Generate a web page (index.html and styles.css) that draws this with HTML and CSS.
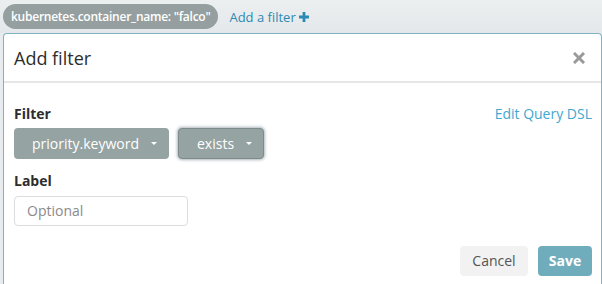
FILE: index.html
```html
<!DOCTYPE html>
<html>
<head>
<meta charset="utf-8">
<link rel="stylesheet" href="styles.css">
</head>
<body>
<div class="topbar">
  <span class="pill">kubernetes.container_name: "falco"</span>
  <span class="add-filter">Add a filter <svg class="plus" width="10" height="10" viewBox="0 0 10 10"><path d="M3.6 0h2.8v3.6H10v2.8H6.4V10H3.6V6.4H0V3.6h3.6z" fill="#2b8ab3"/></svg></span>
</div>
<div class="modal">
  <div class="modal-header">
    <span class="title">Add filter</span>
    <svg class="close" width="12" height="12" viewBox="0 0 12 12"><path d="M2 2L10 10M10 2L2 10" stroke="#9a9a9a" stroke-width="3" stroke-linecap="square"/></svg>
  </div>
  <div class="modal-body">
    <div class="row-head">
      <span class="label">Filter</span>
      <span class="link">Edit Query DSL</span>
    </div>
    <div class="selects">
      <span class="select wide">priority.keyword <span class="caret"></span></span>
      <span class="select focused">exists <span class="caret"></span></span>
    </div>
    <div class="label label2">Label</div>
    <div class="input">Optional</div>
    <div class="footer">
      <span class="btn cancel">Cancel</span>
      <span class="btn save">Save</span>
    </div>
  </div>
</div>
</body>
</html>
```

FILE: styles.css
```css
html, body {
  margin: 0;
  padding: 0;
}
body {
  background: #e9ecee;
  font-family: "Open Sans", "Noto Sans", sans-serif;
  font-size: 14px;
  color: #2d2d2d;
  height: 284px;
  overflow: hidden;
}
.topbar {
  height: 33px;
  display: flex;
  align-items: center;
  padding-left: 3px;
  background: linear-gradient(#eceff0, #e5e8ea);
}
.pill {
  height: 25px;
  line-height: 25px;
  padding: 0 8px;
  border-radius: 13px;
  background: #959f9f;
  color: #fff;
  font-size: 12px;
  font-weight: 600;
  letter-spacing: -0.25px;
}
.add-filter {
  margin-left: 11px;
  color: #2b8ab3;
  font-size: 13px;
  display: flex;
  align-items: center;
  gap: 3px;
}
.modal {
  margin-left: 3px;
  background: #fff;
  border: 1px solid #7fb3c1;
  border-bottom: none;
  border-radius: 4px 4px 0 0;
  height: 251px;
  box-sizing: border-box;
}
.modal-header {
  height: 47px;
  display: flex;
  align-items: center;
  justify-content: space-between;
  padding: 0 16px 0 10px;
  border-bottom: 2px solid #e6e6e6;
}
.title {
  font-size: 18px;
  color: #2d2d2d;
  margin-top: 1px;
}
.modal-body {
  padding: 20px 9px 0 10px;
}
.row-head {
  display: flex;
  justify-content: space-between;
  align-items: center;
  height: 20px;
}
.label {
  font-weight: 700;
  color: #2d2d2d;
}
.link {
  color: #3ea8cf;
}
.selects {
  display: flex;
  gap: 9px;
  margin-top: 5px;
}
.select {
  height: 31px;
  display: flex;
  align-items: center;
  padding: 0 12px 0 18px;
  background: #95a3a2;
  color: #fff;
  border-radius: 4px;
  box-sizing: border-box;
}
.select.wide {
  width: 155px;
}
.select.focused {
  width: 86px;
  border: 1px solid #7d8b8a;
  box-shadow: 0 0 3px 1px rgba(90, 110, 120, 0.5);
}
.caret {
  display: inline-block;
  width: 0;
  height: 0;
  border-left: 3px solid transparent;
  border-right: 3px solid transparent;
  border-top: 3px solid #fff;
  margin-left: 12px;
}
.label2 {
  margin-top: 12px;
  height: 20px;
  line-height: 20px;
}
.input {
  margin-top: 5px;
  width: 174px;
  height: 30px;
  box-sizing: border-box;
  border: 1px solid #dddddd;
  border-radius: 4px;
  padding: 0 12px;
  line-height: 28px;
  color: #8a8a8a;
}
.footer {
  display: flex;
  justify-content: flex-end;
  gap: 10px;
  margin-top: 20px;
}
.btn {
  height: 30px;
  line-height: 30px;
  border-radius: 4px;
  text-align: center;
}
.cancel {
  width: 68px;
  background: #f2f2f2;
  color: #555;
}
.save {
  width: 54px;
  background: #70adbc;
  color: #fff;
  font-weight: 700;
}
```
